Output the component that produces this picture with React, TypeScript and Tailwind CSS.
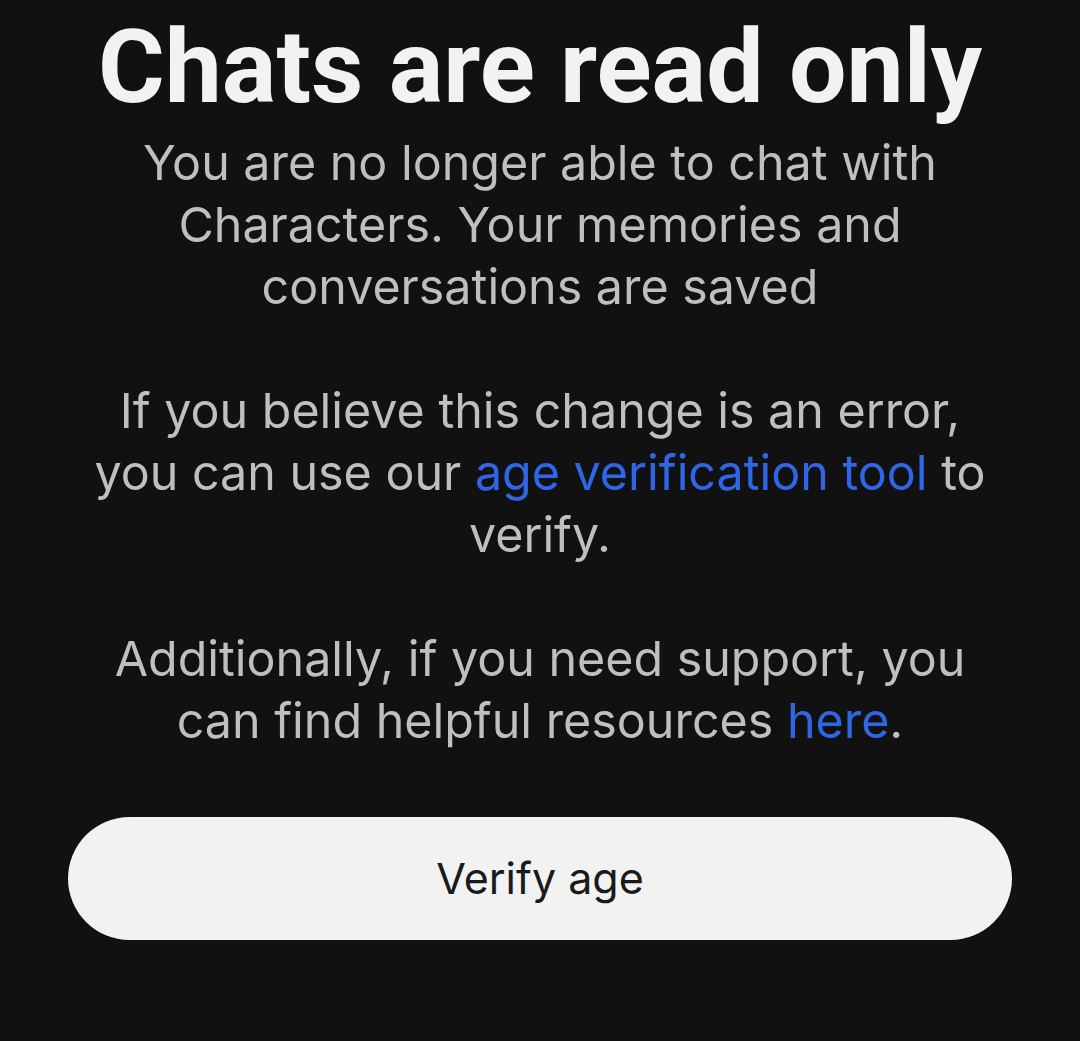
export default function App() {
  return (
    <div className="min-h-[1041px] w-[1080px] bg-[#111111] flex flex-col items-center overflow-hidden">
      <h1
        className="mt-[7px] text-[102px] leading-[120px] font-bold text-[#f2f2f2] text-center whitespace-nowrap"
        style={{ fontFamily: 'Roboto, sans-serif' }}
      >
        Chats are read only
      </h1>

      <div
        className="mt-[5px] text-center text-[48.4px] leading-[62px] text-[#bfbfbf] whitespace-nowrap"
        style={{ fontFamily: 'Inter, sans-serif' }}
      >
        <p>
          You are no longer able to chat with
          <br />
          Characters. Your memories and
          <br />
          conversations are saved
        </p>
        <p className="mt-[62px]">
          If you believe this change is an error,
          <br />
          you can use our <a className="text-[#2f66e8]">age verification tool</a> to
          <br />
          verify.
        </p>
        <p className="mt-[62px]">
          Additionally, if you need support, you
          <br />
          can find helpful resources <a className="text-[#2f66e8]">here</a>.
        </p>
      </div>

      <button
        className="mt-[65px] w-[944px] h-[123px] rounded-full bg-[#f2f2f2] text-[#1a1a1a] text-[43px]"
        style={{ fontFamily: 'Inter, sans-serif' }}
      >
        Verify age
      </button>
    </div>
  );
}
